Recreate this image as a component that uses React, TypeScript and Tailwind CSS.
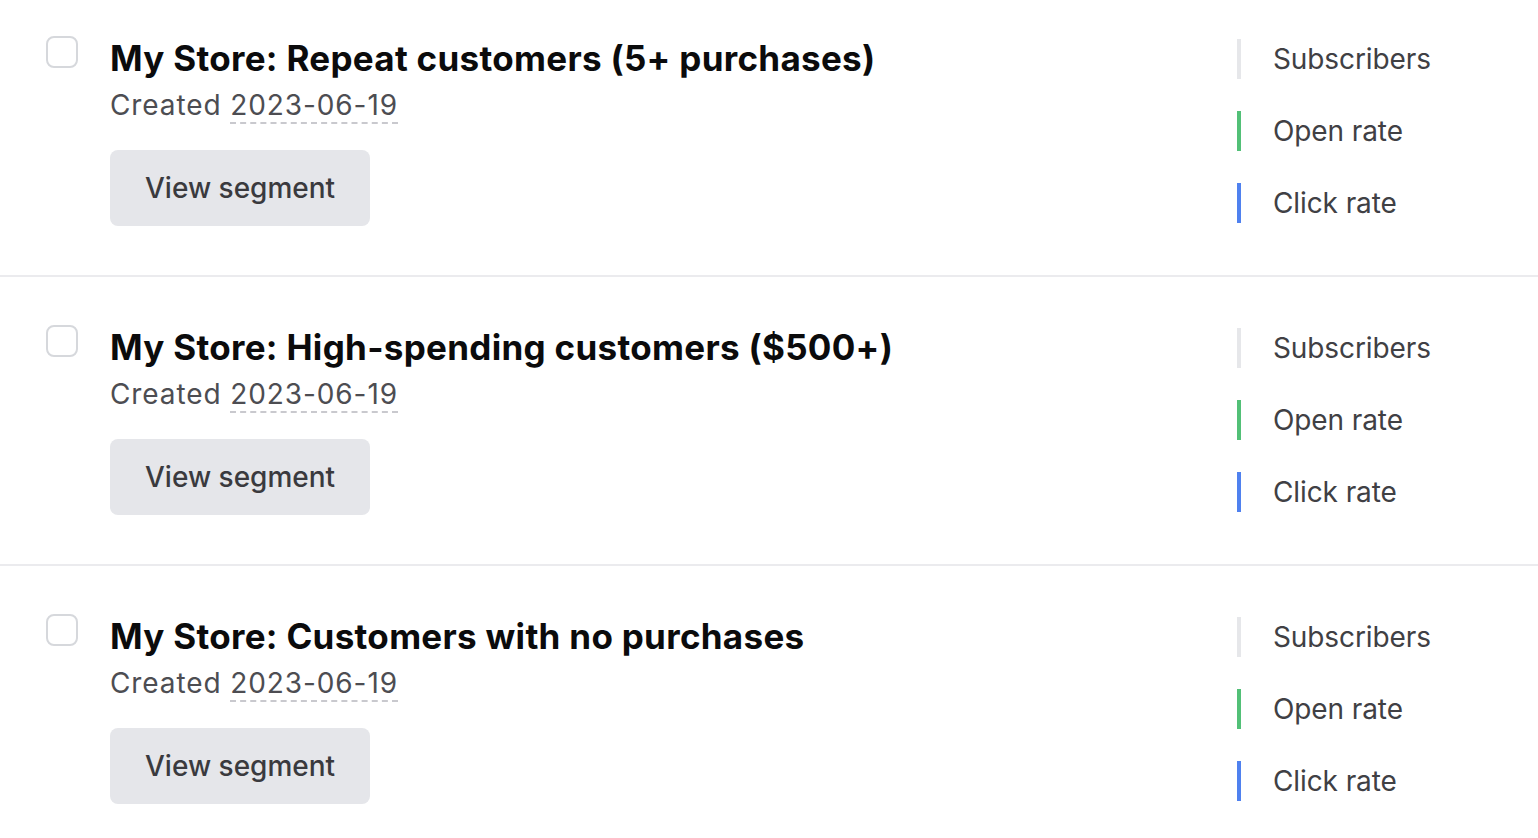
import React from "react";

const rows = [
  "My Store: Repeat customers (5+ purchases)",
  "My Store: High-spending customers ($500+)",
  "My Store: Customers with no purchases",
];

function Metric({ label, bar }: { label: string; bar: string }) {
  return (
    <div className={`flex h-[40px] items-center border-l-4 pl-8 ${bar}`}>
      <span className="text-[28px] leading-[40px] tracking-[-0.1px] text-[#404044]">{label}</span>
    </div>
  );
}

export default function App() {
  return (
    <div
      className="w-[1538px] h-[838px] overflow-hidden bg-white"
      style={{ fontFamily: "Inter, 'Noto Sans', sans-serif" }}
    >
      <div className="-mt-[12px]">
        {rows.map((title, i) => (
          <div
            key={i}
            className={`flex pt-12 pb-[49px] ${i < rows.length - 1 ? "border-b-2 border-[#ebebee]" : ""}`}
          >
            <div className="flex flex-1">
              <div className="ml-[46px] mr-[32px] h-[32px] w-[32px] shrink-0 rounded-[8px] border-2 border-[#d6d8dc] bg-white" />
              <div className="flex flex-col items-start">
                <div className="text-[35px] font-bold leading-[44px] tracking-[0.3px] text-[#0b0b0c]">{title}</div>
                <div className="mt-[5px] text-[28px] leading-[40px] tracking-[0.9px] text-[#4d4d52]">
                  Created{" "}
                  <span className="border-b-2 border-dashed border-[#c9c9ce]">2023-06-19</span>
                </div>
                <button className="mt-[25px] h-[76px] rounded-[8px] bg-[#e5e6ea] px-[35px] text-[28px] font-medium text-[#3a3a3e]">
                  View segment
                </button>
              </div>
            </div>
            <div className="mt-[3px] flex w-[301px] flex-col gap-8">
              <Metric label="Subscribers" bar="border-[#e6e7ea]" />
              <Metric label="Open rate" bar="border-[#52c077]" />
              <Metric label="Click rate" bar="border-[#4f81ef]" />
            </div>
          </div>
        ))}
      </div>
    </div>
  );
}
